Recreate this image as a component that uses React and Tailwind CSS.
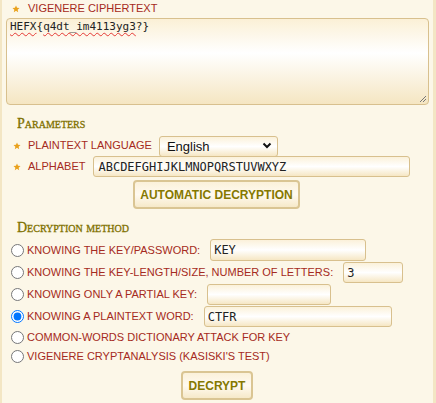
import React, { useState } from 'react';

const label = "text-[11px] leading-[13px] text-[#a52a21] whitespace-nowrap";
const field =
  "border border-[#d8c08e] rounded-[3px] bg-linear-to-b from-[#fbf1da] via-white to-[#f6e7c4] text-[#222] font-['DejaVu_Sans_Mono',monospace] text-[12px] pl-[3px] outline-none";
const heading =
  "font-['Liberation_Serif',serif] text-[14px] leading-[16px] text-[#7f7100] [font-variant:small-caps] [-webkit-text-stroke:0.3px_#7f7100] ml-[11px]";
const button =
  "border-2 border-[#dac593] rounded-[4px] bg-linear-to-b from-[#fbf1da] via-[#fffaf0] to-[#f6e9c9] text-[12px] font-bold text-[#857800] flex items-center justify-center";

function Star() {
  return (
    <svg width="8" height="8" viewBox="0 0 24 24" className="shrink-0">
      <path
        d="M12 1.5l3.1 7 7.4.6-5.6 4.9 1.7 7.4L12 17.5l-6.6 3.9 1.7-7.4-5.6-4.9 7.4-.6z"
        fill="#e9a11c"
      />
    </svg>
  );
}

function Squiggle({ children }) {
  return (
    <span className="underline decoration-wavy decoration-[#e53935] decoration-1 underline-offset-[2px]">
      {children}
    </span>
  );
}

export default function App() {
  const [method, setMethod] = useState('word');

  const radios = [
    { id: 'key', text: 'KNOWING THE KEY/PASSWORD:', value: 'KEY', w: 'w-[156px]', h: 'h-[22px] mt-[3px]' },
    { id: 'len', text: 'KNOWING THE KEY-LENGTH/SIZE, NUMBER OF LETTERS:', value: '3', w: 'w-[60px]', h: 'h-[21px] mt-[1px]' },
    { id: 'partial', text: 'KNOWING ONLY A PARTIAL KEY:', value: '', w: 'w-[124px]', h: 'h-[21px] mt-[1px]' },
    { id: 'word', text: 'KNOWING A PLAINTEXT WORD:', value: 'CTFR', w: 'w-[188px]', h: 'h-[21px] mt-[1px]' },
    { id: 'dict', text: 'COMMON-WORDS DICTIONARY ATTACK FOR KEY', h: 'h-[19px] mt-[1px]' },
    { id: 'kasiski', text: "VIGENERE CRYPTANALYSIS (KASISKI'S TEST)", h: 'h-[19px]' },
  ];

  return (
    <div className="w-[436px] h-[403px] overflow-hidden bg-[#fcf7e8] border-l-2 border-r-[3px] border-[#f3e6c4] px-[4px] font-['Liberation_Sans',Arial,sans-serif]">
      {/* ciphertext */}
      <div className="h-[18px] flex items-center pl-[6px]">
        <Star />
        <span className={`${label} ml-[8px] mt-[-2px]`}>VIGENERE CIPHERTEXT</span>
      </div>
      <div className="relative h-[87px] border border-[#d8c08e] rounded-[4px] bg-linear-to-b from-[#fbf0d6] via-white via-40% to-[#f5e6c2] pl-[3px] pt-[1px] font-['DejaVu_Sans_Mono',monospace] text-[11px] leading-[13px] text-[#222]">
        <Squiggle>HEFX</Squiggle>{'{'}
        <Squiggle>q4dt_im4113yg3</Squiggle>?{'}'}
        <svg width="8" height="8" viewBox="0 0 8 8" className="absolute right-[1px] bottom-[1px]">
          <path d="M7 1L1 7M7 4L4 7" stroke="#777" strokeWidth="1" />
        </svg>
      </div>

      {/* parameters */}
      <div className={`${heading} mt-[11px] h-[16px]`}>Parameters</div>
      <div className="flex items-center h-[21px] mt-[3px] pl-[7px]">
        <Star />
        <span className={`${label} ml-[7px]`}>PLAINTEXT LANGUAGE</span>
        <div className="relative ml-[7px]">
          <select
            defaultValue="English"
            className="appearance-none w-[119px] h-[21px] border border-[#d8c08e] rounded-[3px] bg-linear-to-b from-[#fbf1da] via-white to-[#f6e7c4] text-[13px] text-[#111] pl-[7px] outline-none"
          >
            <option>English</option>
            <option>French</option>
            <option>German</option>
            <option>Spanish</option>
          </select>
          <svg width="10" height="7" viewBox="0 0 10 7" className="absolute right-[6px] top-[8px] pointer-events-none">
            <path d="M1.5 1.5L5 5l3.5-3.5" stroke="#111" strokeWidth="2" fill="none" />
          </svg>
        </div>
      </div>
      <div className="flex items-center h-[21px] pl-[7px]">
        <Star />
        <span className={`${label} ml-[7px]`}>ALPHABET</span>
        <input
          defaultValue="ABCDEFGHIJKLMNOPQRSTUVWXYZ"
          className={`${field} w-[317px] h-[21px] ml-[8px] pl-[4px]`}
        />
      </div>
      <button className={`${button} w-[167px] h-[29px] mt-[3px] ml-[127px]`}>AUTOMATIC DECRYPTION</button>

      {/* decryption method */}
      <div className={`${heading} mt-[11px] h-[16px]`}>Decryption method</div>
      {radios.map((r) => (
        <label key={r.id} className={`flex items-center ${r.h}`}>
          <input
            type="radio"
            name="method"
            checked={method === r.id}
            onChange={() => setMethod(r.id)}
            className="m-0 ml-[5px] mr-[3px] w-[13px] h-[13px] shrink-0"
          />
          <span className={label}>{r.text}</span>
          {r.w && (
            <input defaultValue={r.value} className={`${field} ${r.w} h-full ml-[10px]`} />
          )}
        </label>
      ))}
      <button className={`${button} w-[72px] h-[29px] mt-[5px] ml-[175px]`}>DECRYPT</button>
    </div>
  );
}
